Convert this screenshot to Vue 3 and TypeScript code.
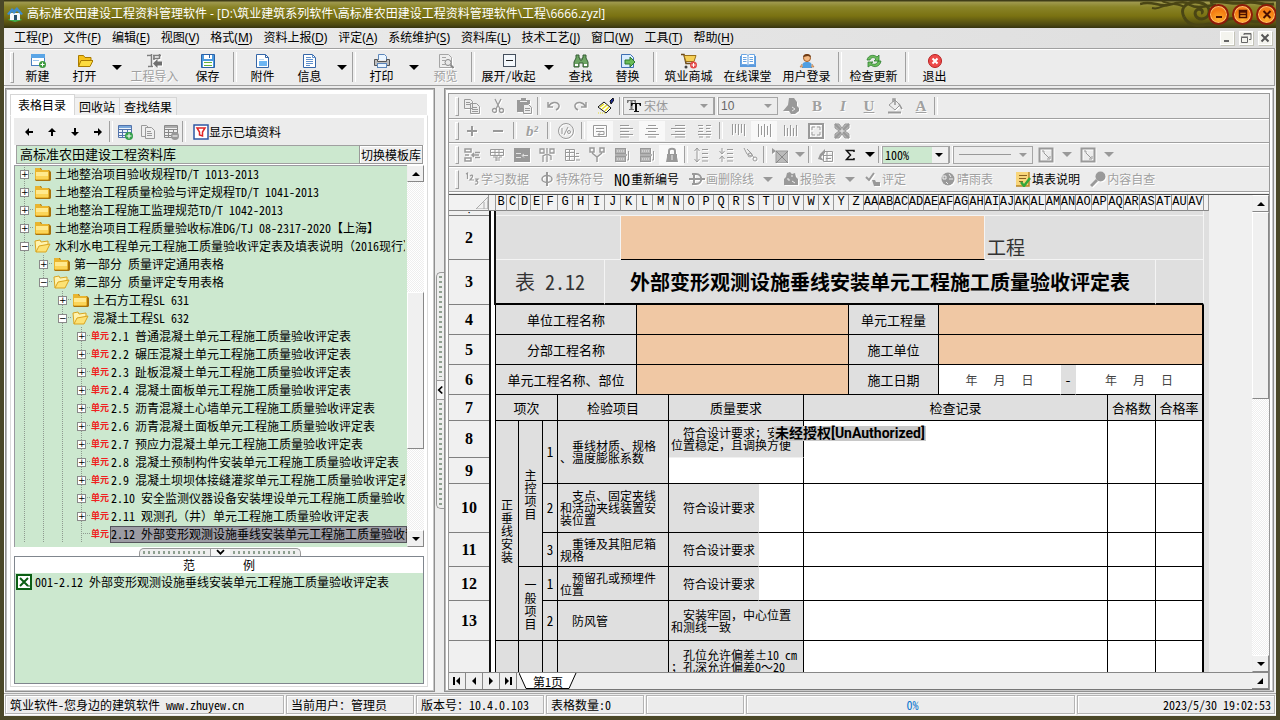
<script setup lang="ts">
import { ref } from 'vue'

const icons: Record<string, string> = {
  create: '<rect x="1.5" y="1.5" width="13" height="11" fill="#fff" stroke="#4a7fc0"/><rect x="1" y="1" width="14" height="4" fill="#5aa5e6"/><path d="M3 7.500h6" stroke="#9cc4ea"/><circle cx="12.500" cy="11.500" r="3.500" fill="#3d9a3d"/><path d="M12.500 9.500v4M10.500 11.500h4" stroke="#fff"/>',
  open: '<path d="M1.500 13.500V2.500h5l1.500 2h6v3" fill="#f6c21c" stroke="#a97b00"/><path d="M1.500 13.500l2.500-6h12l-3 6z" fill="#fddc3e" stroke="#a97b00"/>',
  importer: '<path d="M0 2.500h4M1 13.500h5M4.500 1v12M6 2.500h8M6 5.500h6M7 2v5M12.500 1v5" stroke="#7d7d7d" stroke-width="1.500"/><path d="M6 10.500l4.500-4.500v2.500H15v4h-4.500V15z" fill="#6f6f6f"/>',
  save: '<path d="M1.500 1.500h13v13h-13z" fill="#4c9ade" stroke="#2a61a8"/><rect x="4" y="2" width="8" height="4" fill="#fff"/><path d="M9.500 2v3" stroke="#2a61a8"/><rect x="3" y="8" width="10" height="6" fill="#fff"/><path d="M4 9.500h8M4 12.500h8" stroke="#63b13b"/>',
  attach: '<path d="M1.500 1.500h9l3 3v10h-12z" fill="#fff" stroke="#3566a8"/><path d="M10.500 1.500v3h3" fill="none" stroke="#3566a8"/><rect x="4" y="8" width="8" height="5" fill="#6db5f2"/><path d="M4 6.500h5" stroke="#bcd7f0"/>',
  info: '<path d="M1.500 1.500h9l3 3v10h-12z" fill="#fff" stroke="#3566a8"/><path d="M10.500 1.500v3h3M4 4.500h5M4 6.500h7M4 8.500h7M4 10.500h7M4 12.500h4" fill="none" stroke="#5f8fcb"/>',
  print: '<path d="M4.500 7V1.500h6l2 2V7" fill="#eaf5ff" stroke="#5c86ba"/><path d="M.500 6.500h3v2h9v-2h3v6H.500z" fill="#bdbdbd" stroke="#555"/><rect x="3.500" y="10.500" width="9" height="4" fill="#eaf5ff" stroke="#5c86ba"/>',
  preview: '<path d="M1.500 1.500h9l3 3v10h-12z" fill="#eee" stroke="#a5a5a5"/><path d="M4 4.500h4M4 7.500h3M4 11.500h3" stroke="#a5a5a5"/><circle cx="10" cy="9.500" r="3" fill="#e8e8e8" stroke="#888"/><path d="M12.500 12l3 3" stroke="#888" stroke-width="2"/>',
  collapse: '<rect x="2.500" y="1.500" width="12" height="12" fill="#f4f8fc" stroke="#444f5c"/><path d="M5 7.500h7" stroke="#222"/>',
  find: '<path d="M3 2h3v3h1v2h2V5h1V2h3v3l2 4v5h-5v-4H6v4H1V9l2-4z" fill="#6ca463" stroke="#355d35"/><path d="M2 12h3M11 12h3" stroke="#fff" stroke-width="2"/>',
  replace: '<path d="M1.500 1.500h9l3 3v10h-12z" fill="#d9ecff" stroke="#3f6fb2"/><path d="M5 7h5V4l5 5-5 5v-3H5z" fill="#6bbb58" stroke="#2c7a2c"/>',
  cart: '<path d="M0 1.500h3l2 9h8" fill="none" stroke="#6b4a1b" stroke-width="1.500"/><path d="M3 2.500h12l-2 6H5z" fill="#f5cf55" stroke="#9a7019"/><circle cx="5" cy="14" r="1.500" fill="#444"/><circle cx="12.500" cy="12" r="3.500" fill="#e34a4a"/><path d="M12.500 10v4M10.500 12h4" stroke="#fff"/>',
  book: '<path d="M0 3h16v11H0z" fill="#5a9ade"/><path d="M1.500 1.500h5l1.500 1 1.500-1h5v10h-5l-1.500 1-1.500-1h-5z" fill="#fff" stroke="#6aa5e2"/><path d="M8 2.500v10M3 4.500h3.500M3 6.500h3.500M3 8.500h3.500M9.500 4.500H13M9.500 6.500H13M9.500 8.500H13" stroke="#6aa5e2"/>',
  user: '<path d="M3 15c0-5 1-6 5-6s5 1 5 6z" fill="#4f9fe3"/><path d="M3 11l-2 3h3M13 11l2 3h-3" fill="#f0b27a" stroke="#9e5c28" stroke-width=".500"/><circle cx="8" cy="5" r="3.500" fill="#f3b982" stroke="#9e5c28"/><path d="M4 4c0-4 8-4 8 0l-3-1z" fill="#6e3b14"/>',
  update: '<path d="M1 7c1-5 7-6 10-3l2-2v6H8l2-2C8 4 5 4 4 7zM15 8c-1 6-7 7-10 4l-3 2V9h5l-2 1c2 2 6 2 7-2z" fill="#6cbd5c" stroke="#2f7f31" stroke-width=".800"/>',
  exit: '<circle cx="8" cy="8" r="6.500" fill="#ee4a4a" stroke="#b92020"/><path d="M5.500 5.500l5 5M10.500 5.500l-5 5" stroke="#fff" stroke-width="2"/>',
  left: '<path d="M4 8l4-4v3h4v2H8v3z"/>',
  up: '<path d="M8 4l4 4H9v4H7V8H4z"/>',
  down: '<path d="M8 12l4-4H9V4H7v4H4z"/>',
  right: '<path d="M12 8L8 4v3H4v2h4v3z"/>',
  tableAdd: '<path d="M1.500 1.500h13v12h-13zM1 5.500h14M1 8.500h14M1 11.500h14M5.500 5v9M10.500 5v9" fill="#eef4fb" stroke="#5273ab"/><path d="M2 3h12" stroke="#79a7db" stroke-width="2"/><circle cx="12" cy="12" r="4" fill="#36a04c"/><path d="M12 9.500v5M9.500 12h5" stroke="#fff"/>',
  tableDel: '<path d="M1.500 1.500h13v12h-13zM1 5.500h14M1 8.500h14M1 11.500h14M5.500 5v9M10.500 5v9" fill="#eee" stroke="#888"/><path d="M2 3h12" stroke="#aaa" stroke-width="2"/><circle cx="12" cy="12" r="4" fill="#999"/><path d="M9.500 12h5" stroke="#fff"/>',
  docs: '<path d="M1.500 1.500h5l3 3v8h-8z" fill="#eee" stroke="#999"/><path d="M5.500 3.500h6l3 3v8h-9z" fill="#eee" stroke="#999"/><path d="M7 7.500h4M7 9.500h5M7 11.500h5" stroke="#999"/>',
  filter: '<rect x="1" y="1" width="14" height="14" fill="#fff" stroke="#2f57a2" stroke-width="1.500"/><path d="M4 4h8L9.500 8v4l-3-1V8z" fill="#fff" stroke="#e02424" stroke-width="1.500"/>',
  copy: '<path d="M.500 1.500h6l2 2v7h-8zM6.500 5.500h6l3 3v7h-9z" fill="#eee" stroke="#999"/><path d="M2 4.500h4M2 6.500h4M8 9.500h5M8 11.500h6M8 13.500h6" stroke="#999"/>',
  cut: '<g fill="none" stroke="#999" stroke-width="1.300"><path d="M5 1l5 10M11 1L6 11"/><circle cx="4.500" cy="12.500" r="2"/><circle cx="11.500" cy="12.500" r="2"/></g>',
  paste: '<path d="M1 2h4V0h5v2h4v4H8v8H1z" fill="#999"/><path d="M4 3.500h7" stroke="#eee"/><path d="M7.500 6.500h5l3 3v6h-8z" fill="#eee" stroke="#999"/><path d="M9 10.500h5M9 12.500h5" stroke="#999"/>',
  undo: '<path d="M2 4v5h5M2.500 8.500C5 4 11 3 13 7c.500 3-1 4-3 5" fill="none" stroke="#999" stroke-width="1.500"/>',
  redo: '<path d="M14 4v5H9M13.500 8.500C11 4 5 3 3 7c-.500 3 1 4 3 5" fill="none" stroke="#999" stroke-width="1.500"/>',
  brush: '<path d="M12 3l3-3 1 2-3 4z" fill="#1d2b9a" stroke="#111"/><path d="M6 4l7 6-5 5-8-6z" fill="#fff" stroke="#111"/><path d="M2 9l4-3M4 11l5-4M7 13l4-4" stroke="#e8dc1e" stroke-width="1.500"/><path d="M0 15h7" stroke="#e8dc1e" stroke-dasharray="1 1"/>',
  tt: '<path d="M1 5V2h9v3H9L8 3H6.500v8H8v1H3v-1h1.500V3H3L2 5z" fill="#777"/><path d="M5 8V5h10v3h-1l-1-2h-2v7h2v1H8v-1h1V6H7L6 8z" fill="#111"/>',
  stamp: '<path d="M6 0h5l3 4v4l2 2v3l-4 3H8l-2-3H0l5-6z" fill="#999"/><path d="M9 9l3 2-3 2" fill="none" stroke="#e5e5e5"/>',
  bucket: '<path d="M2 7l6-5 5 5-5 5z" fill="#eee" stroke="#999"/><path d="M8 7V1H6v3M12 6l3 5" fill="none" stroke="#999" stroke-width="1.500"/><path d="M1 14.500h13" stroke="#999" stroke-width="2"/>',
  plus: '<path d="M8 3v10M3 8h10" stroke="#999" stroke-width="2"/>',
  minus: '<path d="M3 8h10" stroke="#999" stroke-width="2"/>',
  fraction: '<circle cx="8" cy="8" r="7.500" fill="none" stroke="#999"/><path d="M4 5v6M10 4l-4 8" stroke="#999"/><circle cx="11" cy="9" r="1.500" fill="none" stroke="#999"/>',
  wrap: '<path d="M1.500 2.500h13v11h-13zM4 5.500h8M4 8.500h8v3H6M8 9.500l-2 2 2 2" fill="none" stroke="#999"/>',
  alignLeft: '<path d="M2 2.500h9M2 5.500h13M2 8.500h9M2 11.500h13M2 14h9" stroke="#999"/>',
  alignCenter: '<path d="M4 2.500h8M2 5.500h12M4 8.500h8M1 11.500h14M4 14h8" stroke="#999"/>',
  alignRight: '<path d="M5 2.500h10M1 5.500h14M5 8.500h10M1 11.500h14M5 14h10" stroke="#999"/>',
  distribute: '<path d="M2 2.500h5M10 2.500h5M3 5.500h4M10 5.500h4M2 8.500h5M10 8.500h5M2 11.500h13M3 14h4M10 14h4" stroke="#999"/>',
  barsTop: '<path d="M2.500 1v11M5.500 1v9M8.500 1v11M11.500 1v9M14.500 1v12" stroke="#999"/>',
  barsMid: '<path d="M2.500 1v13M5.500 3v9M8.500 1v13M11.500 3v9M14.500 1v13" stroke="#999"/>',
  barsBot: '<path d="M2.500 2v11M5.500 5v8M8.500 2v11M11.500 5v8M14.500 2v11" stroke="#999"/>',
  expand: '<rect x="1" y="1" width="14" height="14" fill="none" stroke="#999" stroke-width="2"/><path d="M4 7V4h3M9 4h3v3M12 9v3H9M7 12H4V9" fill="none" stroke="#999"/>',
  shrink: '<path d="M1 1h4l3 4 3-4h4v4l-4 3 4 3v4h-4l-3-4-3 4H1v-4l4-3-4-3z" fill="#b4b4b4" stroke="#999"/><path d="M1 1l14 14M15 1L1 15" stroke="#999" stroke-width="2"/><path d="M6 8h4M8 6v4" stroke="#eee"/>',
  insRow: '<path d="M1 2h6v3H1zM1 11h6v3H1zM1 8h4M8 8h7M11 5.500h5M11 10.500h5M10 6L8 8l2 2" fill="none" stroke="#999" stroke-width="1.500"/>',
  insCol: '<path d="M1.500 2.500h13v6h-13zM1 5.500h14M6 3v5M10 3v5M8 8v6M4 10h3v4M13 10h-3v4" fill="none" stroke="#999"/>',
  cellBox: '<rect x="0" y="1" width="16" height="14" fill="#999"/><path d="M2 6.500h5M2 10.500h5M9 8.500h5M10 7L8 8.500l2 2" fill="none" stroke="#e4e4e4"/>',
  splitA: '<path d="M1 2h4v4H1zM11 2h4v4h-4zM8 1v5M4 15V9l4-2 4 2v4M8 8v7" fill="none" stroke="#999" stroke-width="1.300"/>',
  splitB: '<path d="M1.500 2.500h9v11h-9zM1 5.500h9M5.500 3v10M1 9.500h14M12 6.500h3M12 13h4" fill="none" stroke="#999"/>',
  splitC: '<path d="M1 1h4v4H1zM11 1h4v4h-4zM3 6l5 4 5-4M8 10v5" fill="none" stroke="#999" stroke-width="1.500"/>',
  merge: '<rect x="1.500" y="1.500" width="10" height="5" fill="#b4b4b4" stroke="#999"/><path d="M3 4h7" stroke="#eee" stroke-dasharray="1 1"/><path d="M1 8h12" stroke="#999" stroke-width="1.500"/><rect x="1.500" y="9.500" width="10" height="5" fill="#b4b4b4" stroke="#999"/><path d="M3 12h7" stroke="#eee" stroke-dasharray="1 1"/><path d="M14.500 4v9H13" fill="none" stroke="#999"/>',
  lock: '<path d="M5 7V4c0-3 6-3 6 0v3" fill="none" stroke="#999" stroke-width="2"/><path d="M3 7h10v3l1 5H2l1-5z" fill="#999"/><path d="M8 8v5" stroke="#eee"/>',
  lineUp: '<path d="M4 1v14M1.500 4L4 1l2.500 3M1.500 12L4 15l2.500-3M9 2.500h6M9 6.500h6M9 10.500h6M9 14h6" fill="none" stroke="#999"/>',
  lineDown: '<path d="M4 1v5M4 10v5M1.500 4L4 7l2.500-3M1.500 12L4 9l2.500 3M9 2.500h6M9 6.500h6M9 10.500h6M9 14h6" fill="none" stroke="#999"/>',
  chain: '<path d="M1 1l3 6 4 2M4 2l4 4 3 5" fill="none" stroke="#999"/><circle cx="12" cy="12" r="2" fill="none" stroke="#999"/><circle cx="7" cy="8" r="2" fill="none" stroke="#999"/>',
  region: '<path d="M0 1l4 3-4 3z" fill="#999"/><path d="M4 4h12v12H4z" fill="#bbb" stroke="#999"/><path d="M4 4l12 12M16 4L4 16" stroke="#888"/>',
  formula: '<path d="M6.500 4.500h9v10h-9zM6 8.500h9M9 11.500h5M10 4v10" fill="none" stroke="#999"/><path d="M1 12l2-5 5-5v4L4 10l3 4z" fill="#999"/>',
  sigma: '<path d="M12 5V3.500H4.500L8.500 8l-4 4.500H12V11" fill="none" stroke="#111" stroke-width="1.500"/>',
  border: '<rect x="1.500" y="1.500" width="13" height="13" fill="none" stroke="#999" stroke-width="2"/><path d="M4 4h2v2M6 6l5 5M12 9v3H9" fill="none" stroke="#999"/>',
  learn: '<path d="M2 3l1.500-1v6M6 5c3-2 4 0 0 4h4M11 8h3l-2 2c3 0 2 4-1 3" fill="none" stroke="#999" stroke-width="1.200"/>',
  phi: '<path d="M8 1v14" stroke="#999" stroke-width="2"/><ellipse cx="8" cy="8" rx="5" ry="3.500" fill="none" stroke="#999" stroke-width="1.500"/>',
  strike: '<path d="M3 3h4c7 0 7 10 0 10H3M5 3v10" fill="none" stroke="#999" stroke-width="2"/><path d="M0 8h16" stroke="#999" stroke-width="2"/>',
  report: '<path d="M1 14V8l2-2 1-4 3-1 2 2 3-1 1 4 2 2v6z" fill="#999"/><path d="M4 8h2v2M8 5h2M9 10l3 2" stroke="#eee" fill="none"/>',
  assess: '<path d="M1 6l3 3 5-7" fill="none" stroke="#999" stroke-width="2"/><path d="M7 9h3l1 2h4v4H9z" fill="#999"/>',
  weather: '<circle cx="8" cy="8" r="6.500" fill="#999"/><path d="M3 5h3v3H3zM9 3l2 3M9 8h4M6 11l2 2" stroke="#eee" fill="none"/>',
  note: '<path d="M1 1h13v14H1z" fill="#f8d57a"/><path d="M14 1v14H1" fill="none" stroke="#b88524" stroke-width="1.500"/><path d="M4 4.500h8M4 7.500h7M4 10.500h4" stroke="#886020"/><path d="M6 11l3 4 6-8" fill="none" stroke="#34a83b" stroke-width="2.500"/>',
  check: '<circle cx="10.500" cy="5.500" r="5" fill="#999"/><path d="M7 9l-6 6" stroke="#999" stroke-width="3"/>',
  folder: '<path d="M2 15l-1-1V3l1-1h5l1 2h7l2 2v8l-1 1z" fill="#a8720c"/><path d="M1 13V3l1-1h4l1 2h7l1 1v8l-1 1H2z" fill="#e9b52e"/><path d="M2 6h12v7H2z" fill="#ffe98e"/><path d="M2 10h12v3H2z" fill="#fbd458"/>',
  folderOpen: '<path d="M2 14L1 3l5-1 1 2 7-1v4" fill="#fff3ae" stroke="#d9a520"/><path d="M2 14l3-6 11-2-4 8z" fill="#fde274" stroke="#d9a520"/>',
  excel: '<rect x="1" y="1" width="14" height="14" fill="#fff" stroke="#0b5f14" stroke-width="2"/><path d="M4 4l8 8M12 4l-8 8" stroke="#0b5f14" stroke-width="2"/><path d="M12 12h2" stroke="#0b5f14"/>',
  house: '<path d="M1 14c2-3 12-3 14 0l-7 2z" fill="#3fae4c"/><path d="M3 7h10v7H3z" fill="#f2f6fb"/><path d="M0 8l5-6 2 2 3-3 6 7-2 1-4-4-3 3-2-2-3 3z" fill="#3c8bd0"/><path d="M7 9h3v5H7z" fill="#27506d"/>'
}

const menus = [
  ['工程', 'P'], ['文件', 'F'], ['编辑', 'E'], ['视图', 'V'], ['格式', 'M'], ['资料上报', 'D'], ['评定', 'A'],
  ['系统维护', 'S'], ['资料库', 'L'], ['技术工艺', 'J'], ['窗口', 'W'], ['工具', 'T'], ['帮助', 'H']
]

interface Tool { icon?: string; label?: string; kind?: 'sep' | 'arrow'; size?: string; off?: boolean }
const sep: Tool = { kind: 'sep' }
const arrow: Tool = { kind: 'arrow' }
const mainTools: Tool[] = [
  { icon: 'create', label: '新建' }, { icon: 'open', label: '打开' }, arrow,
  { icon: 'importer', label: '工程导入', size: 'wide', off: true }, { icon: 'save', label: '保存' }, sep,
  { icon: 'attach', label: '附件' }, { icon: 'info', label: '信息' }, arrow, sep,
  { icon: 'print', label: '打印' }, arrow, { icon: 'preview', label: '预览', off: true }, sep,
  { icon: 'collapse', label: '展开/收起', size: 'wider' }, arrow, { icon: 'find', label: '查找' }, { icon: 'replace', label: '替换' }, sep,
  { icon: 'cart', label: '筑业商城', size: 'wide' }, { icon: 'book', label: '在线课堂', size: 'wide' }, { icon: 'user', label: '用户登录', size: 'wide' }, sep,
  { icon: 'update', label: '检查更新', size: 'wide' }, sep, { icon: 'exit', label: '退出' }
]

const alignTools = ['plus', 'minus', '|', 'b2', '|', 'fraction', '|', 'wrap', 'alignLeft', 'alignCenter', 'alignRight', 'distribute', '|', 'barsTop', 'barsMid', 'barsBot', 'expand', 'shrink']
const pressed = ['wrap', 'alignCenter', 'barsMid', 'lock']
const cellTools = ['insRow', 'insCol', 'cellBox', 'splitA', 'splitB', 'splitC', 'merge', 'merge', 'lock', '|', 'lineUp', 'lineDown', 'chain', '|', 'region']

const tabs = ['表格目录', '回收站', '查找结果']
const activeTab = ref(0)
const library = ref('高标准农田建设工程资料库')

// Splits a text so that full-width punctuation keeps its full width beside half-width digits.
function parts(text: string) {
  return text.split(/([（），；：、～±]+)/).filter(Boolean).map((s) => ({ s, full: /^[（），；：、～±]/.test(s) }))
}

interface Node { depth: number; state: '+' | '-' | ''; icon: string; text: string }
const tree: Node[] = [
  { depth: 0, state: '+', icon: 'folder', text: '土地整治项目验收规程TD/T 1013-2013' },
  { depth: 0, state: '+', icon: 'folder', text: '土地整治工程质量检验与评定规程TD/T 1041-2013' },
  { depth: 0, state: '+', icon: 'folder', text: '土地整治工程施工监理规范TD/T 1042-2013' },
  { depth: 0, state: '+', icon: 'folder', text: '土地整治项目工程质量验收标准DG/TJ 08-2317-2020【上海】' },
  { depth: 0, state: '-', icon: 'folderOpen', text: '水利水电工程单元工程施工质量验收评定表及填表说明（2016现行）' },
  { depth: 1, state: '+', icon: 'folder', text: '第一部分 质量评定通用表格' },
  { depth: 1, state: '-', icon: 'folderOpen', text: '第二部分 质量评定专用表格' },
  { depth: 2, state: '+', icon: 'folder', text: '土石方工程SL 631' },
  { depth: 2, state: '-', icon: 'folderOpen', text: '混凝土工程SL 632' },
  ...[
    '2.1 普通混凝土单元工程施工质量验收评定表', '2.2 碾压混凝土单元工程施工质量验收评定表',
    '2.3 趾板混凝土单元工程施工质量验收评定表', '2.4 混凝土面板单元工程施工质量验收评定表',
    '2.5 沥青混凝土心墙单元工程施工质量验收评定表', '2.6 沥青混凝土面板单元工程施工质量验收评定表',
    '2.7 预应力混凝土单元工程施工质量验收评定表', '2.8 混凝土预制构件安装单元工程施工质量验收评定表',
    '2.9 混凝土坝坝体接缝灌浆单元工程施工质量验收评定表', '2.10 安全监测仪器设备安装埋设单元工程施工质量验收评定表',
    '2.11 观测孔（井）单元工程施工质量验收评定表'
  ].map((text): Node => ({ depth: 3, state: '+', icon: '', text })),
  { depth: 3, state: '', icon: '', text: '2.12 外部变形观测设施垂线安装单元工程施工质量验收评定表' }
]

const letters = 'ABCDEFGHIJKLMNOPQRSTUVWXYZ'.split('')
const colNames = [...letters.slice(1), ...letters.slice(0, 22).map((l) => 'A' + l)]
const colWidths = [
  11, 12, 12, 12, 15, 15, 16, 16, 16, 16, 16, 16, 15, 15, 15, 15, 15, 15, 15, 15, 15, 15, 15, 15, 15,
  15, 15, 15, 15, 15, 15, 15, 16, 15, 15, 15, 16, 15, 15, 16, 16, 16, 16, 16, 16, 16, 16
]

interface Cell { n: number; r?: number; c?: string; t?: string[]; date?: boolean }
interface Row { no: string; h: number; zone: string; cells: Cell[] }
const records = (r = 1): Cell[] => [{ n: 20, r, c: 'blank' }, { n: 3, r, c: 'blank' }, { n: 3, r, c: 'blank last' }]
const rows: Row[] = [
  { no: '·', h: 5, zone: 'top', cells: [{ n: 47 }] },
  { no: '2', h: 44, zone: 'top', cells: [{ n: 9 }, { n: 24, c: 'entry ruled' }, { n: 14, c: 'unit', t: ['工程'] }] },
  { no: '3', h: 45, zone: 'top heading', cells: [{ n: 8, c: 'code', t: ['表 2.12'] }, { n: 36, c: 'title', t: ['外部变形观测设施垂线安装单元工程施工质量验收评定表'] }, { n: 3 }] },
  { no: '4', h: 30, zone: 'form', cells: [{ n: 10, t: ['单位工程名称'] }, { n: 14, c: 'entry' }, { n: 6, t: ['单元工程量'] }, { n: 17, c: 'entry last' }] },
  { no: '5', h: 30, zone: 'form', cells: [{ n: 10, t: ['分部工程名称'] }, { n: 14, c: 'entry' }, { n: 6, t: ['施工单位'] }, { n: 17, c: 'entry last' }] },
  { no: '6', h: 30, zone: 'form', cells: [{ n: 10, t: ['单元工程名称、部位'] }, { n: 14, c: 'entry' }, { n: 6, t: ['施工日期'] }, { n: 8, c: 'blank open', date: true }, { n: 1, c: 'open', t: ['-'] }, { n: 8, c: 'blank last', date: true }] },
  { no: '7', h: 26, zone: 'form', cells: [{ n: 5, t: ['项次'] }, { n: 7, t: ['检验项目'] }, { n: 9, t: ['质量要求'] }, { n: 20, t: ['检查记录'] }, { n: 3, t: ['合格数'] }, { n: 3, c: 'last', t: ['合格率'] }] },
  { no: '8', h: 37, zone: 'form', cells: [{ n: 2, r: 6, c: 'upright', t: ['正', '垂', '线', '安', '装'] }, { n: 2, r: 4, c: 'upright', t: ['主', '控', '项', '目'] }, { n: 1, r: 2, c: 'num', t: ['1'] }, { n: 7, r: 2, c: 'para', t: ['垂线材质、规格', '、温度膨胀系数'] }, { n: 9, c: 'para unruled', t: ['符合设计要求；安装', '位置稳定，且调换方便'] }, ...records(2)] },
  { no: '9', h: 26, zone: 'form', cells: [{ n: 9, c: 'blank' }] },
  { no: '10', h: 49, zone: 'form', cells: [{ n: 1, c: 'num', t: ['2'] }, { n: 7, c: 'para', t: ['支点、固定夹线', '和活动夹线装置安', '装位置'] }, { n: 6, c: 'para open', t: ['符合设计要求'] }, { n: 3, c: 'blank' }, ...records()] },
  { no: '11', h: 34, zone: 'form', cells: [{ n: 1, c: 'num', t: ['3'] }, { n: 7, c: 'para', t: ['重锤及其阻尼箱', '规格'] }, { n: 6, c: 'para open', t: ['符合设计要求'] }, { n: 3, c: 'blank' }, ...records()] },
  { no: '12', h: 34, zone: 'form', cells: [{ n: 2, r: 2, c: 'upright', t: ['一', '般', '项', '目'] }, { n: 1, c: 'num', t: ['1'] }, { n: 7, c: 'para', t: ['预留孔或预埋件', '位置'] }, { n: 6, c: 'para open', t: ['符合设计要求'] }, { n: 3, c: 'blank' }, ...records()] },
  { no: '13', h: 40, zone: 'form', cells: [{ n: 1, c: 'num', t: ['2'] }, { n: 7, c: 'para', t: ['防风管'] }, { n: 9, c: 'para', t: ['安装牢固，中心位置', '和测线一致'] }, ...records()] },
  { no: '', h: 60, zone: 'form', cells: [{ n: 2 }, { n: 2 }, { n: 1 }, { n: 7 }, { n: 9, c: 'para high', t: ['孔位允许偏差±10 cm', '；孔深允许偏差0～20'] }, ...records()] }
]
</script>

<template>
  <div class="window">
    <header class="titlebar">
      <svg class="ic" viewBox="0 0 16 16" v-html="icons.house"></svg>
      <h1>高标准农田建设工程资料管理软件 - [D:\筑业建筑系列软件\高标准农田建设工程资料管理软件\工程\6666.zyzl]</h1>
      <svg class="swirl" viewBox="0 0 140 27" fill="none" stroke="#4a4514" stroke-width="3">
        <path d="M0 4c12-4 18 3 28 1s16-5 22 0c8 5 18 0 26 0" stroke-width="2.500" />
        <path d="M12 8c8 2 10-3 16-3M22 1c6 4 18 2 22 6" stroke-width="2" />
        <path d="M44 17c-6-12 8-18 20-13 8 4 6 14-2 15-8 0-9-9-3-10 4 0 4 4 2 4" />
        <path d="M44 17c5 10 15 9 25 7 10 3 20-8 12-10-6 0-6 6-1 7" />
        <path d="M70 3c10-4 20 2 34 0 12-3 18 3 30 1M84 22c12-10 28 6 44-3" />
      </svg>
      <div class="winbtns">
        <button aria-label="最小化"><svg viewBox="0 0 12 12"><path d="M3 9h6" stroke="#4a1000" stroke-width="2" /></svg></button>
        <button aria-label="最大化"><svg viewBox="0 0 12 12"><path d="M2.500 2.500h7v7h-7zM2 4h8M3 6.500h6" fill="none" stroke="#4a1000" stroke-width="1.500" /></svg></button>
        <button aria-label="关闭"><svg viewBox="0 0 12 12"><path d="M2.500 3l7 7M9.500 3l-7 7" stroke="#4a1000" stroke-width="2" /></svg></button>
      </div>
    </header>

    <nav class="menubar">
      <button v-for="m in menus" :key="m[0]">{{ m[0] }}(<u>{{ m[1] }}</u>)</button>
      <div class="docbtns">
        <button aria-label="最小化文档"><svg viewBox="0 0 12 12"><path d="M3 9h5" stroke="#666" stroke-width="2" /></svg></button>
        <button aria-label="还原文档"><svg viewBox="0 0 12 12"><path d="M1.500 5.500h6v5h-6zM4 3V1.500h7v6H9M1 5h7M4 2h7" fill="none" stroke="#666" /></svg></button>
        <button aria-label="关闭文档"><svg viewBox="0 0 12 12"><path d="M2.500 2.500l7 7M9.500 2.500l-7 7" stroke="#555" stroke-width="2" /></svg></button>
      </div>
    </nav>

    <div class="maintools">
      <i class="grip"></i>
      <template v-for="(t, i) in mainTools" :key="i">
        <i v-if="t.kind === 'sep'" class="sep"></i>
        <button v-else-if="t.kind === 'arrow'" class="drop" aria-label="更多"><i class="tri big"></i></button>
        <button v-else class="tool" :class="[t.size, { off: t.off }]" :disabled="t.off">
          <svg class="ic" viewBox="0 0 16 16" v-html="icons[t.icon!]"></svg>
          <span>{{ t.label }}</span>
        </button>
      </template>
    </div>

    <main class="body">
      <section class="pane left">
        <div class="tabs" role="tablist">
          <button v-for="(t, i) in tabs" :key="t" role="tab" :aria-selected="activeTab === i" :class="{ on: activeTab === i }" @click="activeTab = i">{{ t }}</button>
        </div>
        <div class="page">
          <div class="lefttools">
            <button v-for="a in ['left', 'up', 'down', 'right']" :key="a" class="nav" :aria-label="a"><svg class="ic" viewBox="0 0 16 16" v-html="icons[a]"></svg></button>
            <i class="sep thin"></i>
            <button v-for="a in ['tableAdd', 'docs', 'tableDel']" :key="a" class="nav" :aria-label="a"><svg class="ic" viewBox="0 0 16 16" v-html="icons[a]"></svg></button>
            <i class="sep thin"></i>
            <button class="filter"><svg class="ic" viewBox="0 0 16 16" v-html="icons.filter"></svg>显示已填资料</button>
          </div>
          <div class="lib">
            <input v-model="library" aria-label="资料库" />
            <button>切换模板库</button>
          </div>
          <div class="treebox">
            <ul class="tree">
              <li v-for="(n, i) in tree" :key="i" :class="{ picked: !n.state }">
                <i v-for="d in n.depth" :key="d" class="guide"></i>
                <span class="knot"><b v-if="n.state">{{ n.state === '+' ? '+' : '−' }}</b></span>
                <svg v-if="n.icon" class="ic" viewBox="0 0 17 16" v-html="icons[n.icon]"></svg>
                <em v-else>单元</em>
                <span class="label"><span v-for="(p, k) in parts(n.text)" :key="k" :class="{ full: p.full }">{{ p.s }}</span></span>
              </li>
            </ul>
            <div class="vscroll">
              <button aria-label="向上"><i class="tri upw"></i></button>
              <i class="track a"></i><i class="thumb"></i><i class="track b"></i>
              <button aria-label="向下"><i class="tri"></i></button>
            </div>
          </div>
          <div class="hsplit">
            <div class="hgrip"><i></i><svg viewBox="0 0 10 6"><path d="M2 1l3 3 3-3" fill="none" stroke="#000" stroke-width="1.500" /></svg><i></i></div>
          </div>
          <div class="examples">
            <h2><span>范</span><span>例</span></h2>
            <a href="#"><svg class="ic" viewBox="0 0 16 16" v-html="icons.excel"></svg>001-2.12 外部变形观测设施垂线安装单元工程施工质量验收评定表</a>
          </div>
        </div>
      </section>

      <div class="vsplit">
        <div class="vgrip"><i></i><svg viewBox="0 0 6 10"><path d="M4.500 2l-3 3 3 3" fill="none" stroke="#000" stroke-width="1.500" /></svg><i></i></div>
      </div>

      <section class="pane right">
        <div class="editor">
          <div class="row short">
            <i class="grip"></i>
            <button v-for="k in ['copy', 'cut', 'paste']" :key="k" class="t26 off" :aria-label="k" disabled><svg class="ic" viewBox="0 0 16 16" v-html="icons[k]"></svg></button>
            <i class="sep thin"></i>
            <button v-for="k in ['undo', 'redo']" :key="k" class="t26 off" :aria-label="k" disabled><svg class="ic" viewBox="0 0 16 16" v-html="icons[k]"></svg></button>
            <button class="t26" aria-label="格式刷"><svg class="ic" viewBox="0 0 16 16" v-html="icons.brush"></svg></button>
            <i class="sep thin"></i>
            <label class="combo font"><svg class="ic" viewBox="0 0 16 16" v-html="icons.tt"></svg><select disabled aria-label="字体"><option>宋体</option></select><i class="tri dim"></i></label>
            <i class="sep thin"></i>
            <label class="combo size"><select disabled aria-label="字号"><option>10</option></select><i class="tri dim"></i></label>
            <button class="t26 off" aria-label="底色" disabled><svg class="ic" viewBox="0 0 16 16" v-html="icons.stamp"></svg></button>
            <button class="t26 glyph off" disabled><b>B</b></button>
            <button class="t26 glyph off" disabled><b><em>I</em></b></button>
            <button class="t26 glyph off" disabled><b><u>U</u></b></button>
            <button class="t26 off" aria-label="填充" disabled><svg class="ic" viewBox="0 0 16 16" v-html="icons.bucket"></svg></button>
            <button class="t26 glyph off" disabled><b><u>A</u></b></button>
            <i class="sep thin"></i>
          </div>
          <div class="row">
            <i class="grip"></i>
            <template v-for="(k, i) in alignTools" :key="i">
              <i v-if="k === '|'" class="sep"></i>
              <button v-else-if="k === 'b2'" class="t26 glyph off" disabled><b><em>b²</em></b></button>
              <button v-else class="t26 off" :class="{ pressed: pressed.includes(k) }" :aria-label="k" disabled><svg class="ic" viewBox="0 0 16 16" v-html="icons[k]"></svg></button>
            </template>
          </div>
          <div class="row">
            <i class="grip"></i>
            <template v-for="(k, i) in cellTools" :key="i">
              <i v-if="k === '|'" class="sep thin"></i>
              <button v-else class="t25 off" :class="{ pressed: pressed.includes(k) }" :aria-label="k" disabled><svg class="ic" viewBox="0 0 16 16" v-html="icons[k]"></svg></button>
            </template>
            <button class="drop" aria-label="区域选项" disabled><i class="tri big dim"></i></button>
            <i class="sep thin"></i>
            <button class="t25 off" aria-label="公式" disabled><svg class="ic" viewBox="0 0 16 16" v-html="icons.formula"></svg></button>
            <button class="t25" aria-label="求和"><svg class="ic" viewBox="0 0 16 16" v-html="icons.sigma"></svg></button>
            <button class="drop" aria-label="求和选项"><i class="tri big"></i></button>
            <i class="sep thin"></i>
            <label class="combo zoom"><select aria-label="缩放"><option>100%</option></select><i class="tri"></i></label>
            <i class="sep thin"></i>
            <label class="combo line"><select disabled aria-label="线型"><option></option></select><hr /><i class="tri dim"></i></label>
            <template v-for="k in 2" :key="k">
              <button class="t26 off" aria-label="边框" disabled><svg class="ic" viewBox="0 0 16 16" v-html="icons.border"></svg></button>
              <button class="drop" aria-label="边框选项" disabled><i class="tri big dim"></i></button>
            </template>
          </div>
          <div class="row words">
            <i class="grip"></i>
            <button class="word off" disabled><svg class="ic" viewBox="0 0 16 16" v-html="icons.learn"></svg>学习数据</button>
            <button class="word off" disabled><svg class="ic" viewBox="0 0 16 16" v-html="icons.phi"></svg>特殊符号</button>
            <button class="word"><b class="no">NO</b>重新编号</button>
            <button class="word off" disabled><svg class="ic" viewBox="0 0 16 16" v-html="icons.strike"></svg>画删除线</button>
            <button class="drop" aria-label="删除线选项" disabled><i class="tri big dim"></i></button>
            <button class="word off" disabled><svg class="ic" viewBox="0 0 16 16" v-html="icons.report"></svg>报验表</button>
            <button class="drop" aria-label="报验表选项" disabled><i class="tri big dim"></i></button>
            <button class="word off" disabled><svg class="ic" viewBox="0 0 16 16" v-html="icons.assess"></svg>评定</button>
            <button class="word far off" disabled><svg class="ic" viewBox="0 0 16 16" v-html="icons.weather"></svg>晴雨表</button>
            <button class="word mid"><svg class="ic" viewBox="0 0 16 16" v-html="icons.note"></svg>填表说明</button>
            <button class="word off" disabled><svg class="ic" viewBox="0 0 16 16" v-html="icons.check"></svg>内容自查</button>
          </div>

          <div class="sheetframe">
            <div class="sheetmain">
              <div class="sheet">
                <table>
                  <colgroup>
                    <col class="chead" /><col class="ca" />
                    <col v-for="(w, i) in colWidths" :key="i" :style="{ width: w + 'px' }" />
                    <col class="cedge" /><col />
                  </colgroup>
                  <thead>
                    <tr>
                      <th class="corner"><svg viewBox="0 0 12 12"><path d="M12 0v12H0zM12 4v8M8 5v7" fill="none" stroke="#aaa" /></svg></th>
                      <th></th>
                      <th v-for="c in colNames" :key="c" scope="col"><span>{{ c }}</span></th>
                      <th></th>
                      <th class="rest"></th>
                    </tr>
                  </thead>
                  <tbody>
                    <tr v-for="(r, i) in rows" :key="i" :class="r.zone" :style="{ height: r.h + 'px' }">
                      <th scope="row">{{ r.no }}</th>
                      <td class="cola"></td>
                      <td v-for="(c, j) in r.cells" :key="j" :colspan="c.n" :rowspan="c.r || 1" :class="c.c">
                        <div v-if="c.date" class="date"><span>年</span><span>月</span><span>日</span></div>
                        <div v-else-if="c.t"><template v-for="(line, k) in c.t" :key="k"><br v-if="k" /><span v-for="(p, q) in parts(line)" :key="q" :class="{ full: p.full }">{{ p.s }}</span></template></div>
                      </td>
                      <td class="edge"></td>
                      <td class="rest"></td>
                    </tr>
                  </tbody>
                </table>
                <strong class="mark">未经授权[UnAuthorized]</strong>
              </div>
              <div class="vscroll tall">
                <button aria-label="向上"><i class="tri upw"></i></button>
                <i class="thumb"></i><i class="track b"></i>
                <button aria-label="向下"><i class="tri"></i></button>
              </div>
            </div>
            <div class="sheetbar">
              <button aria-label="第一页"><svg viewBox="0 0 16 16"><path d="M4 4h2v8H4zM11 4v8L7 8z" /></svg></button>
              <button aria-label="上一页"><svg viewBox="0 0 16 16"><path d="M10 4v8L6 8z" /></svg></button>
              <button aria-label="下一页"><svg viewBox="0 0 16 16"><path d="M6 4v8l4-4z" /></svg></button>
              <button aria-label="最后一页"><svg viewBox="0 0 16 16"><path d="M10 4h2v8h-2zM5 4v8l4-4z" /></svg></button>
              <button class="sheettab"><svg viewBox="0 0 58 16"><path d="M0 0l7 15.500h43L57 0" fill="#fff" stroke="#000" /></svg><span>第1页</span></button>
              <i class="sizer"><svg viewBox="0 0 16 16"><path d="M11 5v6H5z" /></svg></i>
            </div>
          </div>
        </div>
      </section>
    </main>

    <footer class="status">
      <span class="s1">筑业软件-您身边的建筑软件 www.zhuyew.cn</span>
      <span class="s2">当前用户<b class="full">：</b>管理员</span>
      <span class="s2">版本号<b class="full">：</b>10.4.0.103</span>
      <span class="s3">表格数量:0</span>
      <span class="s3"></span>
      <span class="progress">0%</span>
      <span class="clock">2023/5/30 19:02:53</span>
    </footer>
  </div>
</template>

<style>
body { background: #3f3c1e; }
</style>

<style scoped>
* { box-sizing: border-box; }
.window { display: flex; flex-direction: column; height: 100vh; min-height: 480px; background: #ececec; border: 4px solid #4b4828; border-width: 0 4px 4px; box-shadow: inset 1px 0 #fff; overflow: hidden; color: #000; font: 12px/14px "Noto Sans CJK SC", sans-serif; font-feature-settings: "hwid" 1; }
button { border: 0; padding: 0; margin: 0; background: none; color: inherit; font: inherit; font-feature-settings: inherit; white-space: nowrap; }
i, em { font-style: normal; }
.full { font-feature-settings: normal; font-weight: inherit; }
.ic { width: 16px; height: 16px; flex: none; display: block; }
.off { color: #a0a0a0; text-shadow: 1px 1px #fff; }

.titlebar { flex: none; display: flex; align-items: center; gap: 4px; height: 28px; margin: 0 -4px; padding: 0 3px 0 7px; position: relative; color: #fff; background: linear-gradient(#3f3c18 0, #3f3c18 1px, #a09a50 2px, #8a8428 7px, #7a7212 16px, #4c4812 25px, #35330f 28px); }
.titlebar h1 { margin: 0; font: 12px/18px "Open Sans", "Noto Sans CJK SC", sans-serif; flex: 1; white-space: nowrap; font-feature-settings: normal; }
.swirl { position: absolute; right: 0; top: 0; width: 140px; height: 27px; }
.winbtns { display: flex; gap: 3px; position: relative; }
.winbtns button { width: 21px; height: 21px; border-radius: 50%; border: 2px solid #8e1a08; background: radial-gradient(circle at 50% 80%, #ffb030, #f47a10 60%, #ea8a38); box-shadow: inset 0 0 0 1px #ffc070; display: flex; align-items: center; justify-content: center; }
.winbtns svg { width: 12px; height: 12px; flex: none; }

.menubar { flex: none; display: flex; align-items: center; gap: 11px; height: 20px; padding: 0 4px 0 10px; background: linear-gradient(90deg, #ececec, #dedede); font-family: "Noto Sans", "Noto Sans CJK SC", sans-serif; font-feature-settings: normal; }
.menubar u { text-underline-offset: 2px; }
.docbtns { margin-left: auto; display: flex; gap: 5px; }
.docbtns button { width: 14px; height: 14px; background: #f4f4ee; border: 1px solid #fff; box-shadow: 1px 1px #c4c4b8; display: flex; align-items: center; justify-content: center; }
.docbtns svg { width: 12px; height: 12px; flex: none; }

.maintools { flex: none; display: flex; height: 38px; margin-right: 1px; padding: 0 6px; border: 1px solid #a0a0a0; border-left: 0; box-shadow: inset 0 1px #fff; }
.grip { flex: none; width: 4px; margin: 3px 0 2px; border: 1px solid #a0a0a0; border-left-color: #fff; border-top-color: #fff; }
.sep { flex: none; width: 8px; display: flex; justify-content: center; align-self: stretch; }
.sep::before { content: ""; width: 2px; margin: 3px 0; border-left: 1px solid #a0a0a0; border-right: 1px solid #fff; }
.sep.thin { width: 4px; }
.tool { width: 47px; flex: none; padding-top: 4px; display: flex; flex-direction: column; align-items: center; }
.tool span { line-height: 13px; }
.tool.wide { width: 59px; }
.tool.wider { width: 63px; }
.drop { flex: none; width: 17px; display: flex; align-items: center; justify-content: center; }
.tri { width: 0; height: 0; flex: none; border: 4px solid transparent; border-top-color: #000; border-bottom: 0; }
.tri.big { border-width: 5px 5px 0; }
.tri.dim { border-top-color: #999; }
.tri.upw { border-top: 0; border-bottom: 4px solid #000; }

.body { flex: 1; min-height: 0; display: flex; padding: 2px 2px 1px 1px; }
.pane { background: #fff; border: 1px solid #909090; box-shadow: inset 1px 1px #b8b8b8, inset -1px -1px #c8c8c8; }
.left { flex: none; width: 430px; padding: 5px 6px 4px 4px; display: flex; flex-direction: column; }
.tabs { flex: none; display: flex; align-items: flex-end; height: 21px; background: #ececec; margin-right: 1px; }
.tabs button { height: 18px; padding: 0 4px; border: 1px solid #d6d6d6; border-width: 1px 1px 0 0; background: #f1f1f1; line-height: 16px; }
.tabs .on { height: 21px; padding: 0 8px 0 7px; background: #fff; border-left-width: 1px; }
.page { flex: 1; min-height: 0; display: flex; flex-direction: column; padding: 2px 3px; border: 1px solid #dcdcdc; border-top-color: #fff; }
.lefttools { flex: none; display: flex; align-items: center; height: 27px; padding-left: 3px; background: #ececec; }
.nav { width: 23px; display: flex; justify-content: center; }
.filter { display: flex; align-items: center; margin-left: 7px; }
.lib { flex: none; display: flex; height: 20px; padding: 0 1px 1px 2px; }
.lib input { flex: 1; min-width: 0; padding: 0 3px 2px; border: 1px solid #a0a0a0; border-width: 1px 0 1px 1px; border-radius: 0; background: #cce8cf; font: 13px/16px "Noto Sans CJK SC", sans-serif; outline: 0; }
.lib button { width: 64px; border: 1px solid #999; background: #efefef; box-shadow: inset 1px 1px #fff; }
.treebox { flex: 1; min-height: 0; display: flex; background: #cce8cf; border-left: 1px solid #9a9aa0; }
.tree { flex: 1; min-width: 0; margin: 0; padding: 0 2px 0 0; list-style: none; overflow: hidden; box-shadow: inset 0 1px #9a9aa0; }
.tree li { display: flex; align-items: center; height: 18px; white-space: nowrap; }
.guide, .knot { flex: none; width: 19px; height: 18px; background: repeating-linear-gradient(#8f9a90 0 1px, transparent 1px 2px) 9px 0 / 1px 100% no-repeat; }
.knot { position: relative; display: flex; align-items: center; justify-content: center; }
.knot::after { content: ""; position: absolute; left: 9px; right: 0; top: 8px; height: 1px; background: repeating-linear-gradient(90deg, #8f9a90 0 1px, transparent 1px 2px); }
.knot b { position: relative; z-index: 1; width: 9px; height: 9px; border: 1px solid #8a8a8a; background: #fff; font: 9px/7px "DejaVu Sans", sans-serif; text-align: center; overflow: hidden; }
.tree .ic { width: 17px; margin-right: 4px; }
.tree em { width: 17px; margin-right: 3px; color: #f02020; font-size: 9px; font-weight: 700; }
.tree .label { line-height: 16px; overflow: hidden; }
.picked .label { flex: 1; margin-left: -1px; margin-right: -2px; padding-left: 1px; height: 17px; line-height: 15px; background: #9c9ca4; box-shadow: inset 0 0 0 1px #55555c; }
.vscroll { flex: none; width: 17px; display: flex; flex-direction: column; background: repeating-conic-gradient(#fff 0 25%, #eee 0 50%) 0 0 / 2px 2px; }
.vscroll button { flex: none; height: 17px; border: 1px solid #888; border-left-color: #eee; border-top-color: #fff; background: #f0f0f0; display: flex; align-items: center; justify-content: center; }
.thumb { flex: 154; background: #f0f0f0; border: 1px solid #888; border-left-color: #fff; border-top-color: #fff; }
.track.a { flex: 110; }
.track.b { flex: 81; }
.tall .thumb { flex: 185; }
.tall .track.b { flex: 257; }
.hsplit { flex: none; height: 9px; display: flex; justify-content: center; padding-top: 1px; margin-left: 2px; }
.hgrip { width: 162px; height: 8px; display: flex; border: 1px solid #999; border-bottom: 0; border-radius: 5px 5px 0 0; background: #eee; }
.hgrip i { flex: 1; margin: 2px 3px; background: repeating-linear-gradient(90deg, #8fa090 0 2px, transparent 2px 5px); height: 3px; }
.hgrip svg { width: 20px; height: 7px; background: #f6f6f6; border-left: 1px solid #999; }
.examples { flex: none; height: 128px; border: 1px solid #80868e; background: #cce8cf; }
.examples h2 { margin: 0; display: flex; justify-content: center; gap: 48px; height: 16px; background: #fff; font: inherit; line-height: 16px; }
.examples a { display: flex; align-items: center; gap: 3px; height: 18px; padding-left: 1px; color: inherit; text-decoration: none; white-space: nowrap; }

.vsplit { flex: none; width: 9px; display: flex; align-items: center; padding-left: 1px; }
.vgrip { width: 8px; height: 237px; display: flex; flex-direction: column; border: 1px solid #999; border-right: 0; border-radius: 5px 0 0 5px; background: #eee; }
.vgrip i { flex: 1; margin: 3px 2px; width: 3px; background: repeating-linear-gradient(#8fa090 0 2px, transparent 2px 5px); }
.vgrip svg { width: 7px; height: 20px; background: #f6f6f6; border: solid #999; border-width: 1px 0; }

.right { flex: 1; min-width: 0; padding: 4px 3px 1px; display: flex; }
.editor { flex: 1; min-width: 0; display: flex; flex-direction: column; border: 1px solid #999; border-bottom: 0; background: #ececec; }
.row { flex: none; display: flex; align-items: center; height: 24px; padding-left: 6px; border-bottom: 1px solid #a0a0a0; box-shadow: 0 1px #fff; }
.row.short, .row.words { height: 25px; }
.row > .drop { width: 16px; }
.row .grip { align-self: stretch; }
.t26, .t25 { flex: none; width: 26px; height: 20px; display: flex; align-items: center; justify-content: center; }
.t25 { width: 25px; }
.off .ic { filter: drop-shadow(1px 1px 0 #fff); }
.pressed { box-shadow: inset 0 0 0 20px #f8f8f8; }
.glyph { font: 15px/18px "Liberation Serif", serif; font-feature-settings: normal; }
.glyph em { font-style: italic; }
.combo { flex: none; display: flex; align-items: center; height: 18px; border: 1px solid #a6a6a6; padding-right: 5px; color: #999; }
.combo select { flex: 1; min-width: 0; width: 0; height: 14px; padding: 0 2px; border: 0; background: none; appearance: none; color: inherit; opacity: 1; font: 12px/14px "Noto Sans CJK SC", sans-serif; font-feature-settings: "hwid" 1; }
.combo.font { width: 91px; padding-left: 2px; }
.combo.size { width: 60px; }
.combo.size select { color: #666; font-family: "Liberation Sans", sans-serif; font-feature-settings: normal; }
.combo.zoom { width: 67px; background: linear-gradient(90deg, #cce8cf 49px, #f0f0f0 49px); color: #000; }
.combo.line { width: 80px; }
.combo.line select { flex: none; width: 2px; padding: 0; }
.combo hr { flex: 1; margin: 0 8px 0 3px; border: 0; border-top: 1px solid #999; }
.word { flex: none; display: flex; align-items: center; gap: 1px; margin-right: 10px; }
.row.words > .grip { margin-right: 5px; }
.row.words > .drop { width: 20px; margin: 0 5px 0 -6px; }
.word.far { margin-left: 24px; }
.word.mid { margin-left: 12px; }
.no { width: 16px; font: 16px/16px "Noto Sans CJK SC", sans-serif; font-feature-settings: "hwid" 1; }

.sheetframe { flex: 1; min-height: 0; display: flex; flex-direction: column; margin: 2px 0 0; border-top: 1px solid #555; border-bottom: 1px solid #777; }
.sheetmain { flex: 1; min-height: 0; display: flex; }
.sheet { flex: 1; min-width: 0; position: relative; overflow: hidden; background: #f0f0f0; }
table { width: 100%; table-layout: fixed; border-collapse: separate; border-spacing: 0; }
col.chead { width: 40px; }
col.ca { width: 7px; }
col.cedge { width: 5px; }
th, td { padding: 0; overflow: hidden; white-space: nowrap; text-align: center; vertical-align: middle; }
thead tr { height: 16px; }
thead th { height: 16px; border-right: 1px solid #999; border-bottom: 1px solid #888; background: #f2f2f2; font: 12px/15px "Liberation Mono", monospace; }
thead th span { display: flex; justify-content: center; height: 15px; overflow: hidden; }
.corner { text-align: right; }
.corner svg { width: 12px; height: 12px; display: block; margin-left: auto; }
tbody th { background: #f0f0f0; border-bottom: 1px solid #808080; font: bold 16px/16px "Liberation Serif", serif; }
tbody tr:first-child th { font-size: 8px; line-height: 4px; }
td { background: #dfdfdf; border-right: 1px solid #000; border-bottom: 1px solid #000; font-size: 13px; line-height: 14px; }
.top td { border-color: #f4f4f4; }
.heading td { border-bottom: 2px solid #000; }
td.cola { background: #fff; border-left: 2px solid #111; border-bottom: 0; }
.top td.cola { border-right: 2px solid #111; }
td.entry { background: #f0c8a4; }
.top td.ruled { border-bottom-color: #000; }
td.blank { background: #fff; }
td.last { border-right-width: 2px; }
td.open { border-right-color: transparent; background-clip: border-box; }
td.unruled { border-bottom-color: #f0f0f0; }
.form td.edge, .top td.edge { border: 0; background: #dfdfdf; }
.form td.rest, .top td.rest, th.rest { border: 0; background: #f0f0f0; }
td.unit { text-align: left; vertical-align: bottom; padding: 0 0 1px 2px; font-size: 19px; line-height: 22px; color: #333; }
td.code { font-size: 20px; line-height: 24px; color: #333; }
td.title { font-size: 20px; line-height: 24px; font-weight: 700; }
td.upright { font-size: 12px; line-height: 13px; }
td.para { padding-left: 2px; text-align: left; text-indent: 12px; font-size: 12px; line-height: 12px; }
td.high { vertical-align: top; padding-top: 8px; }
.date { display: flex; justify-content: center; gap: 16px; font-size: 12px; color: #444; }
.mark { position: absolute; left: 325px; top: 231px; padding: 0 1px; background: #c8c8c8; font: bold 14px/15px Roboto, "Noto Sans CJK SC", sans-serif; font-feature-settings: normal; }
.sheetbar { flex: none; display: flex; height: 17px; background: #efefef; border-top: 1px solid #888; }
.sheetbar button { flex: none; width: 17px; border-right: 1px solid #888; display: flex; align-items: center; justify-content: center; }
.sheetbar svg { width: 16px; height: 16px; flex: none; }
.sheetbar .sheettab { position: relative; width: 58px; margin-left: 2px; border: 0; line-height: 15px; }
.sheetbar .sheettab svg { position: absolute; inset: 0; width: 58px; }
.sheettab span { position: relative; }
.sizer { margin-left: auto; width: 17px; background: #f0f0f0; border: 1px solid #888; border-width: 0 1px 1px 0; }

.status { flex: none; display: flex; gap: 2px; height: 23px; padding: 1px; border-top: 1px solid #a8a8a8; }
.status > span { flex: none; height: 19px; padding-left: 4px; border: 1px solid #b4b4b4; box-shadow: 1px 1px #fff, inset 1px 1px #fff; line-height: 17px; white-space: nowrap; }
.status b { font-weight: 400; }
.s1 { width: 279px; }
.s2 { width: 128px; }
.s3 { width: 98px; }
.status > .progress { flex: 1; text-align: center; color: #0a76d0; }
.status > .clock { width: 198px; padding: 0 3px 0 0; text-align: right; }
</style>
